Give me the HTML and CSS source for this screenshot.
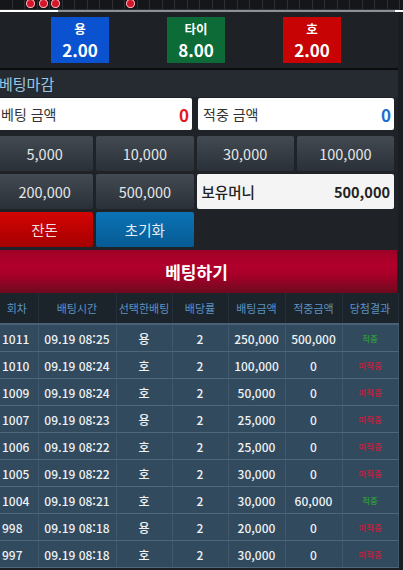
FILE: index.html
```html
<!DOCTYPE html>
<html lang="ko">
<head>
<meta charset="utf-8">
<title>베팅</title>
<link rel="stylesheet" href="styles.css">
</head>
<body>
<div class="page">
  <div class="road">
    <div class="cell"></div><div class="cell"></div><div class="cell"><span class="dot"></span></div><div class="cell"><span class="dot"></span></div><div class="cell"><span class="dot"></span></div><div class="cell"></div><div class="cell"></div><div class="cell"></div><div class="cell"></div><div class="cell"></div><div class="cell"><span class="dot"></span></div><div class="cell"></div><div class="cell"></div><div class="cell"></div><div class="cell"></div><div class="cell"></div><div class="cell"></div><div class="cell"></div><div class="cell"></div><div class="cell"></div><div class="cell"></div><div class="cell"></div><div class="cell"></div><div class="cell"></div><div class="cell"></div><div class="cell"></div><div class="cell"></div><div class="cell"></div><div class="cell"></div><div class="cell"></div><div class="cell"></div><div class="cell"></div>
  </div>
  <div class="scroll"><div class="thumb"></div></div>
  <div class="content">
    <div class="odds">
      <div class="odd odd-blue"><span class="odd-name">용</span><span class="odd-val">2.00</span></div>
      <div class="odd odd-green"><span class="odd-name">타이</span><span class="odd-val">8.00</span></div>
      <div class="odd odd-red"><span class="odd-name">호</span><span class="odd-val">2.00</span></div>
    </div>
    <div class="status">베팅마감</div>
    <div class="panel">
      <div class="inputs">
        <div class="field"><span>베팅 금액</span><b class="num-red">0</b></div>
        <div class="field"><span>적중 금액</span><b class="num-blue">0</b></div>
      </div>
      <div class="chips">
        <div class="chip">5,000</div>
        <div class="chip">10,000</div>
        <div class="chip">30,000</div>
        <div class="chip">100,000</div>
        <div class="chip">200,000</div>
        <div class="chip">500,000</div>
        <div class="money"><span>보유머니</span><b>500,000</b></div>
        <div class="chip chip-red">잔돈</div>
        <div class="chip chip-blue">초기화</div>
      </div>
    </div>
    <div class="bet">베팅하기</div>
    <table class="history">
      <colgroup>
        <col class="c1"><col class="c2"><col class="c3"><col class="c4"><col class="c5"><col class="c6"><col class="c7">
      </colgroup>
      <thead>
        <tr><th>회차</th><th>배팅시간</th><th>선택한배팅</th><th>배당률</th><th>배팅금액</th><th>적중금액</th><th>당첨결과</th></tr>
      </thead>
      <tbody>
        <tr><td>1011</td><td>09.19 08:25</td><td>용</td><td>2</td><td>250,000</td><td>500,000</td><td class="win">적중</td></tr>
        <tr><td>1010</td><td>09.19 08:24</td><td>호</td><td>2</td><td>100,000</td><td>0</td><td class="lose">미적중</td></tr>
        <tr><td>1009</td><td>09.19 08:24</td><td>호</td><td>2</td><td>50,000</td><td>0</td><td class="lose">미적중</td></tr>
        <tr><td>1007</td><td>09.19 08:23</td><td>용</td><td>2</td><td>25,000</td><td>0</td><td class="lose">미적중</td></tr>
        <tr><td>1006</td><td>09.19 08:22</td><td>호</td><td>2</td><td>25,000</td><td>0</td><td class="lose">미적중</td></tr>
        <tr><td>1005</td><td>09.19 08:22</td><td>호</td><td>2</td><td>30,000</td><td>0</td><td class="lose">미적중</td></tr>
        <tr><td>1004</td><td>09.19 08:21</td><td>호</td><td>2</td><td>30,000</td><td>60,000</td><td class="win">적중</td></tr>
        <tr><td>998</td><td>09.19 08:18</td><td>용</td><td>2</td><td>20,000</td><td>0</td><td class="lose">미적중</td></tr>
        <tr><td>997</td><td>09.19 08:18</td><td>호</td><td>2</td><td>30,000</td><td>0</td><td class="lose">미적중</td></tr>
      </tbody>
    </table>
  </div>
</div>
</body>
</html>
```

FILE: styles.css
```css
html, body {
  margin: 0;
  padding: 0;
  background: #1a1e23;
  font-family: "Noto Sans CJK KR", "Noto Sans", sans-serif;
  overflow: hidden;
}

.page {
  width: 403px;
  height: 570px;
  overflow: hidden;
  background: #1a1e23;
}

/* roadmap strip */
.road {
  height: 10px;
  display: flex;
  align-items: flex-end;
  overflow: hidden;
  background: #141619;
}

.cell {
  flex: 0 0 12.5px;
  height: 12.5px;
  box-sizing: border-box;
  border-right: 1px solid #2c3035;
  border-bottom: 1px solid #2c3035;
  display: flex;
  align-items: center;
  justify-content: center;
}

.dot {
  width: 9px;
  height: 9px;
  border-radius: 50%;
  background: #d3162a;
  box-shadow: 0 0 0 1px #f3b8bf inset;
}

.scroll {
  height: 2px;
  background: #ffffff;
  display: flex;
}

.thumb {
  margin-left: 58px;
  width: 337px;
  background: #8d9095;
}

.content {
  margin-left: -4px;
  width: 402px;
  background: #1f2328;
}

/* odds */
.odds {
  display: flex;
  gap: 58px;
  padding: 5px 0 5px 55px;
  border-bottom: 2px solid #0b0d0f;
  background: #1e2227;
}

.odd {
  width: 58px;
  height: 46px;
  display: flex;
  flex-direction: column;
  align-items: center;
  justify-content: center;
  color: #ffffff;
  font-weight: 700;
}

.odd-name {
  display: block;
  font-size: 12.5px;
  line-height: normal;
  margin-bottom: -1px;
}

.odd-val {
  display: block;
  font-size: 17px;
  line-height: normal;
}

.odd-blue { background: #0b52d1; }
.odd-green { background: #0c6b36; }
.odd-red { background: #c70303; }

.status {
  height: 27px;
  line-height: 27px;
  padding-left: 3px;
  font-size: 15px;
  color: #98c8e6;
  background: #262b31;
}

.panel {
  margin-right: 4px;
  padding-top: 1px;
  background: #1f2328;
}

.inputs {
  display: grid;
  grid-template-columns: 1fr 1fr;
  gap: 6px;
}

.field {
  height: 32px;
  background: #ffffff;
  border-radius: 2px;
  display: flex;
  align-items: center;
  justify-content: space-between;
  padding: 0 3px 0 5px;
  font-size: 14px;
  color: #333333;
}

.field b {
  font-size: 17px;
  font-weight: 700;
}

.num-red { color: #e0191d; }
.num-blue { color: #1a6ed0; }

.chips {
  margin-top: 6px;
  display: grid;
  grid-template-columns: repeat(4, 1fr);
  grid-auto-rows: 35px;
  gap: 3px;
  padding-bottom: 3px;
}

.chip {
  display: flex;
  align-items: center;
  justify-content: center;
  font-size: 14.5px;
  color: #e4e6e8;
  background: linear-gradient(#434a52, #2a3037);
  border-radius: 2px;
}

.chip-red {
  background: linear-gradient(#d40404, #a50000);
  color: #f6dede;
}

.chip-blue {
  background: linear-gradient(#0b73b6, #075b93);
  color: #e3eef7;
}

.money {
  grid-column: span 2;
  background: #f4f4f4;
  border-radius: 2px;
  display: flex;
  align-items: center;
  justify-content: space-between;
  padding: 0 4px 0 5px;
  font-size: 14.5px;
  color: #222222;
  font-weight: 500;
}

.money b {
  font-weight: 700;
}

.bet {
  width: 401px;
  height: 43px;
  display: flex;
  align-items: center;
  justify-content: center;
  color: #ffffff;
  font-size: 17px;
  font-weight: 700;
  background: linear-gradient(#9e0027 0%, #b2002c 35%, #a50028 60%, #6d0a1e 100%);
}

/* history table */
.history {
  width: 402px;
  border-collapse: collapse;
  table-layout: fixed;
  font-size: 12px;
}

.c1 { width: 42px; }
.c2 { width: 78px; }
.c3 { width: 56px; }
.c4 { width: 56px; }
.c5 { width: 57px; }
.c6 { width: 57px; }
.c7 { width: 56px; }

.history th {
  height: 30px;
  padding: 0;
  background: #1b232b;
  color: #5d93c3;
  font-weight: 400;
  font-size: 11px;
  text-align: center;
  border-right: 1px solid #242f39;
  border-bottom: 2px solid #4a6074;
  white-space: nowrap;
}

.history td {
  height: 26px;
  padding: 0;
  background: #324a5e;
  color: #eef2f5;
  text-align: center;
  border-right: 1px solid #41586c;
  border-bottom: 1px solid #4f677b;
  white-space: nowrap;
  font-weight: 500;
}

.history td:first-child {
  text-align: left;
  padding-left: 6px;
}

.history td.win {
  color: #2f9c3b;
  font-size: 8.5px;
}

.history td.lose {
  color: #c4213b;
  font-size: 8.5px;
}
```
